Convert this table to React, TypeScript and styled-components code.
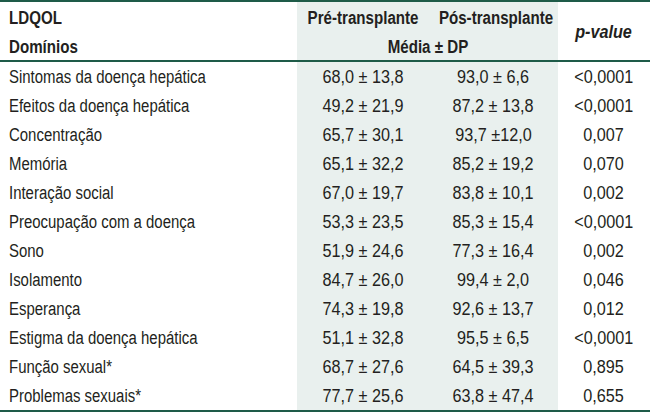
import React from "react";
import styled, { createGlobalStyle } from "styled-components";

const GlobalStyle = createGlobalStyle`
  html, body { margin: 0; padding: 0; background: #ffffff; }
  body {
    font-family: "Liberation Sans", Arial, Helvetica, sans-serif;
    color: #231f20;
  }
`;

const Table = styled.table`
  width: 650px;
  border-collapse: separate;
  border-spacing: 0;
  table-layout: fixed;
  font-size: 18px;
  line-height: 20px;
  border-top: 2px solid #1e5b48;
  border-bottom: 2px solid #1e5b48;
`;

const Th = styled.th<{ $shaded?: boolean; $left?: boolean; $italic?: boolean; $rule?: boolean }>`
  height: 30px;
  box-sizing: border-box;
  font-weight: bold;
  padding: ${(p) => (p.$left ? "2px 0 0 9px" : "2px 0 0 0")};
  text-align: ${(p) => (p.$left ? "left" : "center")};
  font-style: ${(p) => (p.$italic ? "italic" : "normal")};
  background: ${(p) => (p.$shaded ? "#e9f0ee" : "transparent")};
  border-bottom: ${(p) => (p.$rule ? "2px solid #1e5b48" : "none")};
  vertical-align: middle;
  white-space: nowrap;
  overflow: visible;
`;

const Td = styled.td<{ $shaded?: boolean; $left?: boolean }>`
  height: 29px;
  box-sizing: border-box;
  padding: ${(p) => (p.$left ? "1px 0 0 9px" : "1px 0 0 0")};
  text-align: ${(p) => (p.$left ? "left" : "center")};
  background: ${(p) => (p.$shaded ? "#e9f0ee" : "transparent")};
  vertical-align: middle;
  white-space: nowrap;
  overflow: visible;
`;

/* condensed face: the reference uses a condensed grotesque */
const Cond = styled.span<{ $scale: number; $left?: boolean }>`
  display: inline-block;
  transform: scaleX(${(p) => p.$scale});
  transform-origin: ${(p) => (p.$left ? "left center" : "center center")};
`;

const rows: [string, string, string, string][] = [
  ["Sintomas da doença hepática", "68,0 ± 13,8", "93,0 ± 6,6", "<0,0001"],
  ["Efeitos da doença hepática", "49,2 ± 21,9", "87,2 ± 13,8", "<0,0001"],
  ["Concentração", "65,7 ± 30,1", "93,7 ±12,0", "0,007"],
  ["Memória", "65,1 ± 32,2", "85,2 ± 19,2", "0,070"],
  ["Interação social", "67,0 ± 19,7", "83,8 ± 10,1", "0,002"],
  ["Preocupação com a doença", "53,3 ± 23,5", "85,3 ± 15,4", "<0,0001"],
  ["Sono", "51,9 ± 24,6", "77,3 ± 16,4", "0,002"],
  ["Isolamento", "84,7 ± 26,0", "99,4 ± 2,0", "0,046"],
  ["Esperança", "74,3 ± 19,8", "92,6 ± 13,7", "0,012"],
  ["Estigma da doença hepática", "51,1 ± 32,8", "95,5 ± 6,5", "<0,0001"],
  ["Função sexual*", "68,7 ± 27,6", "64,5 ± 39,3", "0,895"],
  ["Problemas sexuais*", "77,7 ± 25,6", "63,8 ± 47,4", "0,655"],
];

const HEAD = 0.84;
const LABEL = 0.83;
const NUM = 0.9;

export default function App() {
  return (
    <>
      <GlobalStyle />
      <Table>
        <colgroup>
          <col style={{ width: 297 }} />
          <col style={{ width: 131 }} />
          <col style={{ width: 130 }} />
          <col style={{ width: 92 }} />
        </colgroup>
        <thead>
          <tr>
            <Th $left>
              <Cond $scale={HEAD} $left>LDQOL</Cond>
            </Th>
            <Th $shaded>
              <Cond $scale={HEAD}>Pré-transplante</Cond>
            </Th>
            <Th $shaded>
              <Cond $scale={HEAD}>Pós-transplante</Cond>
            </Th>
            <Th rowSpan={2} $italic $rule>
              <Cond $scale={NUM}>p-value</Cond>
            </Th>
          </tr>
          <tr>
            <Th $left $rule>
              <Cond $scale={HEAD} $left>Domínios</Cond>
            </Th>
            <Th $shaded $rule colSpan={2}>
              <Cond $scale={HEAD}>Média ± DP</Cond>
            </Th>
          </tr>
        </thead>
        <tbody>
          {rows.map(([name, pre, pos, p]) => (
            <tr key={name}>
              <Td $left>
                <Cond $scale={LABEL} $left>{name}</Cond>
              </Td>
              <Td $shaded>
                <Cond $scale={NUM}>{pre}</Cond>
              </Td>
              <Td $shaded>
                <Cond $scale={NUM}>{pos}</Cond>
              </Td>
              <Td>
                <Cond $scale={NUM}>{p}</Cond>
              </Td>
            </tr>
          ))}
        </tbody>
      </Table>
    </>
  );
}
